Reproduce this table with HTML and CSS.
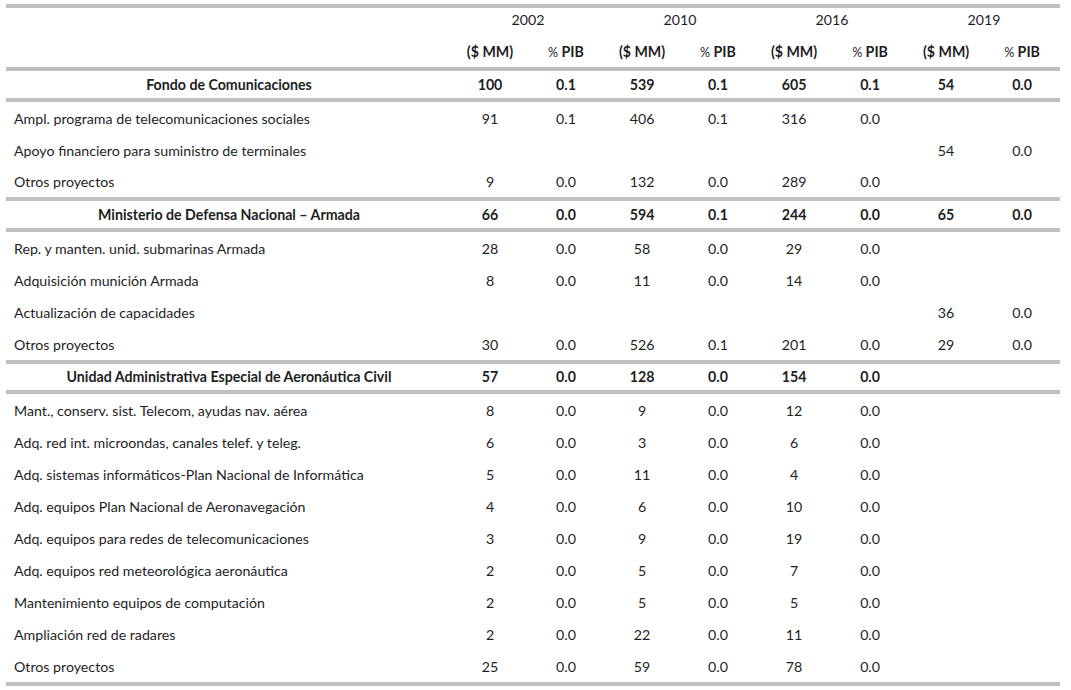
FILE: index.html
```html
<!DOCTYPE html>
<html lang="es">
<head>
<meta charset="utf-8">
<title>Inversiones</title>
<link rel="stylesheet" href="styles.css">
</head>
<body>
<table class="tbl">
  <colgroup>
    <col class="c-label">
    <col class="c-num"><col class="c-num"><col class="c-num"><col class="c-num">
    <col class="c-num"><col class="c-num"><col class="c-num"><col class="c-num">
  </colgroup>
  <thead>
    <tr class="h-year">
      <th></th>
      <th colspan="2">2002</th>
      <th colspan="2">2010</th>
      <th colspan="2">2016</th>
      <th colspan="2">2019</th>
    </tr>
    <tr class="h-sub">
      <th></th>
      <th>($ MM)</th><th><span class="pct">%</span> PIB</th>
      <th>($ MM)</th><th><span class="pct">%</span> PIB</th>
      <th>($ MM)</th><th><span class="pct">%</span> PIB</th>
      <th>($ MM)</th><th><span class="pct">%</span> PIB</th>
    </tr>
  </thead>
  <tbody class="sec">
    <tr class="grp">
      <td class="lbl">Fondo de Comunicaciones</td>
      <td>100</td><td>0.1</td><td>539</td><td>0.1</td><td>605</td><td>0.1</td><td>54</td><td>0.0</td>
    </tr>
    <tr class="row first">
      <td class="lbl">Ampl. programa de telecomunicaciones sociales</td>
      <td>91</td><td>0.1</td><td>406</td><td>0.1</td><td>316</td><td>0.0</td><td></td><td></td>
    </tr>
    <tr class="row">
      <td class="lbl">Apoyo financiero para suministro de terminales</td>
      <td></td><td></td><td></td><td></td><td></td><td></td><td>54</td><td>0.0</td>
    </tr>
    <tr class="row">
      <td class="lbl">Otros proyectos</td>
      <td>9</td><td>0.0</td><td>132</td><td>0.0</td><td>289</td><td>0.0</td><td></td><td></td>
    </tr>
  </tbody>
  <tbody class="sec">
    <tr class="grp">
      <td class="lbl">Ministerio de Defensa Nacional – Armada</td>
      <td>66</td><td>0.0</td><td>594</td><td>0.1</td><td>244</td><td>0.0</td><td>65</td><td>0.0</td>
    </tr>
    <tr class="row first">
      <td class="lbl">Rep. y manten. unid. submarinas Armada</td>
      <td>28</td><td>0.0</td><td>58</td><td>0.0</td><td>29</td><td>0.0</td><td></td><td></td>
    </tr>
    <tr class="row">
      <td class="lbl">Adquisición munición Armada</td>
      <td>8</td><td>0.0</td><td>11</td><td>0.0</td><td>14</td><td>0.0</td><td></td><td></td>
    </tr>
    <tr class="row">
      <td class="lbl">Actualización de capacidades</td>
      <td></td><td></td><td></td><td></td><td></td><td></td><td>36</td><td>0.0</td>
    </tr>
    <tr class="row">
      <td class="lbl">Otros proyectos</td>
      <td>30</td><td>0.0</td><td>526</td><td>0.1</td><td>201</td><td>0.0</td><td>29</td><td>0.0</td>
    </tr>
  </tbody>
  <tbody class="sec last">
    <tr class="grp">
      <td class="lbl">Unidad Administrativa Especial de Aeronáutica Civil</td>
      <td>57</td><td>0.0</td><td>128</td><td>0.0</td><td>154</td><td>0.0</td><td></td><td></td>
    </tr>
    <tr class="row first">
      <td class="lbl">Mant., conserv. sist. Telecom, ayudas nav. aérea</td>
      <td>8</td><td>0.0</td><td>9</td><td>0.0</td><td>12</td><td>0.0</td><td></td><td></td>
    </tr>
    <tr class="row">
      <td class="lbl">Adq. red int. microondas, canales telef. y teleg.</td>
      <td>6</td><td>0.0</td><td>3</td><td>0.0</td><td>6</td><td>0.0</td><td></td><td></td>
    </tr>
    <tr class="row">
      <td class="lbl">Adq. sistemas informáticos-Plan Nacional de Informática</td>
      <td>5</td><td>0.0</td><td>11</td><td>0.0</td><td>4</td><td>0.0</td><td></td><td></td>
    </tr>
    <tr class="row">
      <td class="lbl">Adq. equipos Plan Nacional de Aeronavegación</td>
      <td>4</td><td>0.0</td><td>6</td><td>0.0</td><td>10</td><td>0.0</td><td></td><td></td>
    </tr>
    <tr class="row">
      <td class="lbl">Adq. equipos para redes de telecomunicaciones</td>
      <td>3</td><td>0.0</td><td>9</td><td>0.0</td><td>19</td><td>0.0</td><td></td><td></td>
    </tr>
    <tr class="row">
      <td class="lbl">Adq. equipos red meteorológica aeronáutica</td>
      <td>2</td><td>0.0</td><td>5</td><td>0.0</td><td>7</td><td>0.0</td><td></td><td></td>
    </tr>
    <tr class="row">
      <td class="lbl">Mantenimiento equipos de computación</td>
      <td>2</td><td>0.0</td><td>5</td><td>0.0</td><td>5</td><td>0.0</td><td></td><td></td>
    </tr>
    <tr class="row">
      <td class="lbl">Ampliación red de radares</td>
      <td>2</td><td>0.0</td><td>22</td><td>0.0</td><td>11</td><td>0.0</td><td></td><td></td>
    </tr>
    <tr class="row">
      <td class="lbl">Otros proyectos</td>
      <td>25</td><td>0.0</td><td>59</td><td>0.0</td><td>78</td><td>0.0</td><td></td><td></td>
    </tr>
  </tbody>
</table>
</body>
</html>
```
FILE: styles.css
```css
html, body {
  margin: 0;
  padding: 0;
  background: #ffffff;
}
body {
  padding: 4px 0 0 6px;
  font-family: "Lato", "Liberation Sans", sans-serif;
  font-size: 14.2px;
  color: #1e1e1e;
}
.tbl {
  width: 1054px;
  border-collapse: collapse;
  table-layout: fixed;
  border-top: 4px solid #c0c0c0;
  border-bottom: 4px solid #c0c0c0;
}
.c-label { width: 446px; }
.c-num { width: 76px; }
.tbl th, .tbl td {
  padding: 0;
  text-align: center;
  vertical-align: middle;
  white-space: nowrap;
}
.h-year th {
  height: 23px;
  font-weight: normal;
}
.h-sub th {
  height: 32px;
  padding-top: 4px;
  font-weight: bold;
}
.pct { font-size: 12.5px; font-weight: normal; }
.grp td {
  height: 27px;
  font-weight: bold;
  border-top: 4px solid #c0c0c0;
  border-bottom: 4px solid #c0c0c0;
}
.sec.last .grp td { height: 26px; }
.row td {
  height: 30.8px;
  padding-top: 1px;
}
.last .row td {
  height: 30px;
  padding-top: 2px;
}
.row .lbl {
  text-align: left;
  padding-left: 8px;
}
```
